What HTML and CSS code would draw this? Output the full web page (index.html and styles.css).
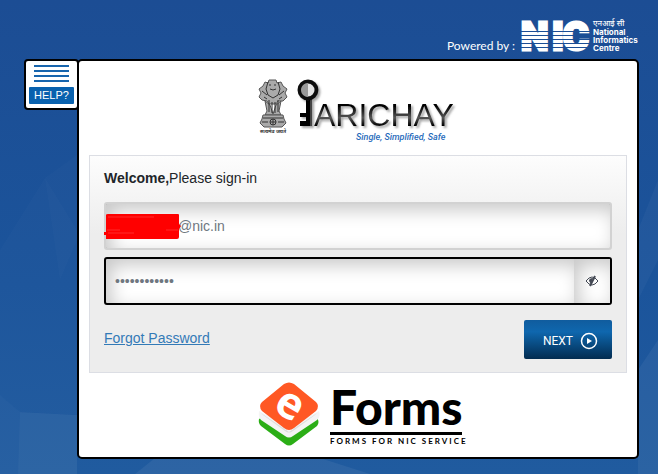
FILE: index.html
```html
<!DOCTYPE html>
<html lang="en">
<head>
<meta charset="utf-8">
<title>Parichay sign-in</title>
<link rel="stylesheet" href="styles.css">
</head>
<body>
<svg class="backdrop" viewBox="0 0 658 474" preserveAspectRatio="none" aria-hidden="true">
  <g fill="#fff">
    <path d="M0 395 20 412 77 415V474H0z" opacity=".03"/>
    <path d="M20 412 77 415V474H18z" opacity=".03"/>
    <path d="M77 155 45 178 60 280 77 240z" opacity=".015"/>
    <path d="M0 250 45 178 77 230V415L20 412 0 395z" opacity=".015"/>
    <path d="M135 474 155 458H320L370 474z" opacity=".06"/>
    <path d="M658 340 638 370V474H658z" opacity=".05"/>
    <path d="M658 180 638 230V300L658 260z" opacity=".03"/>
  </g>
</svg>
<div class="page">
  <header class="powered">
    <span class="powered-label">Powered by :</span>
    <svg class="nic-mark" viewBox="0 0 68 31" role="img" aria-label="NIC">
      <text class="nic-text" y="30"><tspan x="0">N</tspan><tspan x="31">I</tspan><tspan x="42">C</tspan></text>
      <path class="nic-stripes" d="M-1 11h71v1h-71zM-1 15h71v1h-71zM-1 19h71v1h-71zM-1 23h71v1h-71zM-1 27h71v1h-71z"/>
    </svg>
    <p class="nic-name"><span lang="hi">एनआई सी</span><span>National</span><span>Informatics</span><span>Centre</span></p>
  </header>
  <main class="layout">
    <button class="help" type="button">
      <span class="help-lines"></span>
      <span class="help-label">HELP?</span>
    </button>
    <section class="card">
      <svg class="parichay" viewBox="0 0 202 72" role="img" aria-label="Parichay: Single, Simplified, Safe">
        <defs>
          <linearGradient id="metal" x1="0" y1="0" x2="0" y2="1"><stop offset=".25" stop-color="#000"/><stop offset=".58" stop-color="#555"/><stop offset=".8" stop-color="#000"/></linearGradient>
          <filter id="shade" x="-10%" y="-20%" width="125%" height="150%"><feDropShadow dx="2" dy="2" stdDeviation="1.2" flood-color="#777" flood-opacity=".65"/></filter>
        </defs>
        <g fill="#aaa" stroke="#555" stroke-width="1">
          <path d="M6 8 8 4 11 5 12 2 19 2 20 5 24 4 26 8 30 11 28 15 30 19 26 23 21 23 19 26H12L10 23 5 22 2 19 4 15 2 11z"/>
          <path d="M8 23 10 33 8 37H24L22 33 24 23 19 27 16 36 13 27z"/>
          <path d="M6 37H26L27 41 29 45 25 49H7L3 45 5 41z"/>
        </g>
        <g fill="none" stroke="#333" stroke-width="1">
          <path d="M12 7h2m3 0h2M13 11q3 2 6 0M11 4 9 11 11 17 16 20 21 17 23 11 21 4M5 13l5 4M27 13l-5 4M7 19l3 2M25 19l-3 2M12 22v12M15 24v11M18 24v11M21 22v12M6 40H26"/>
          <circle cx="16" cy="44" r="3"/><path d="M16 41v6M13 44h6M5 44h6M21 44h6"/>
        </g>
        <text class="motto" x="3" y="55">सत्यमेव जयते</text>
        <g filter="url(#shade)">
          <path d="M49 21h4v27h-4z"/>
          <path d="M53 21h2v27h-2z" fill="#444"/>
          <path d="M43 35h6v4h-6zM43 43h7v5h-7z"/>
          <circle cx="51" cy="12" r="8.5" fill="#e4e4e4" stroke="#111" stroke-width="4"/>
          <path d="M51 5a7 7 0 0 0 0 14z" fill="#999"/>
          <text class="parichay-text" x="57" y="48">ARICHAY</text>
        </g>
        <text class="tagline" x="99" y="62">Single, Simplified, Safe</text>
      </svg>
      <form class="signin">
        <h1 class="welcome"><strong>Welcome,</strong>Please sign-in</h1>
        <div class="field">
          <svg class="redaction" viewBox="0 0 77 28" aria-hidden="true"><path fill="red" d="M2 3Q2 2 4 2L74 2Q75 2 75 3V12L77 14 75 17V25Q75 27 73 27L2 27V23H0V20H2z"/><path d="M4 5H50M3 18H16M4 21H30M62 18H74" stroke="#ff2a2a" fill="none"/></svg>
          <input class="email" type="text" aria-label="Email" value="@nic.in">
        </div>
        <div class="field field-password">
          <input class="password" type="password" aria-label="Password" value="abcdefghijkl">
          <button class="reveal" type="button" aria-label="Show password">
            <svg viewBox="0 0 14 12"><g fill="none" stroke="#454a55"><path d="M1 6Q4 2 7 2T13 6Q10 10 7 10T1 6z"/><path d="M5 11 10 1" stroke-width="2"/></g><path d="M8 3Q4 3 4 6L6 9z" fill="#454a55"/></svg>
          </button>
        </div>
        <div class="actions">
          <a class="forgot" href="#">Forgot Password</a>
          <button class="next" type="submit">NEXT
            <svg viewBox="0 0 18 18" aria-hidden="true"><circle cx="9" cy="9" r="7.5" fill="none" stroke="#fff" stroke-width="1.5"/><path d="M7 6v6l5-3z" fill="#fff"/></svg>
          </button>
        </div>
      </form>
      <footer class="eforms">
        <svg class="eforms-mark" viewBox="0 0 62 66" aria-hidden="true">
          <path d="M3 36 31 52 59 36Q62 40 59 44L35 62Q31 65 27 62L3 44Q0 41 1 37z" fill="#2bae16"/>
          <path d="M1 29 31 45 61 29Q63 35 59 38L35 54Q31 57 27 54L3 38Q0 35 1 29z" fill="#f4f4f4"/>
          <path d="M3 31 31 50 59 31 57 33 35 49Q31 52 27 49L5 33z" fill="#ddd"/>
          <path d="M26 2Q31-1 36 2L58 20Q62 24 58 29L36 46Q31 50 26 46L4 29Q0 24 4 20z" fill="#ff5824"/>
          <text class="e-letter" x="18" y="36" transform="rotate(30 31 24)">e</text>
        </svg>
        <div class="eforms-words">
          <span class="eforms-name">Forms</span>
          <span class="eforms-sub">FORMS FOR NIC SERVICE</span>
        </div>
      </footer>
    </section>
  </main>
</div>
</body>
</html>
```
FILE: styles.css
```css
* { box-sizing: border-box; }
body {
  margin: 0;
  min-height: 100vh;
  background: linear-gradient(#1c4d94, #1b549b 60%, #205b9f);
  color: #212529;
  font-family: "Liberation Sans", Arial, sans-serif;
  font-size: 14px;
}
button, input { font: inherit; }
.backdrop { position: absolute; width: 100%; height: 100%; z-index: -1; }
.page { padding: 18px 19px 15px 24px; }
.powered { display: flex; justify-content: flex-end; align-items: flex-start; height: 41px; color: #fff; }
.powered-label { margin: 20px 6px 0 0; font: 12px/16px Lato, sans-serif; }
.nic-mark { width: 68px; height: 31px; margin: 2px 4px 0 0; overflow: visible; }
.nic-text { font: 900 39px Roboto, sans-serif; fill: #fff; stroke: #fff; stroke-width: 3; }
.nic-stripes { fill: #1c4e95; }
.nic-name { display: flex; flex-direction: column; width: 46px; margin: 0; font: bold 8px/8px Inter, "Noto Sans", sans-serif; }
.nic-name span { white-space: nowrap; }
.nic-name span:first-child { line-height: 10px; font-weight: 500; }
.layout { display: flex; align-items: flex-start; }
.help {
  display: flex; flex-direction: column; gap: 5px;
  width: 55px; height: 51px; padding: 4px 3px;
  margin-right: -2px; border: 2px solid #000; border-radius: 4px; background: #fff;
}
.help-lines { flex: none; height: 17px; margin: 0 5px; background: repeating-linear-gradient(#1765ad 0 2px, #fff 2px 5px); }
.help-label { background: #0861ae; color: #fff; font-size: 11px; line-height: 17px; text-align: center; border-radius: 1px; }
.card { flex: 1; border: 2px solid #000; border-radius: 5px; background: #fff; padding: 17px 10px 9px; }
.parichay { display: block; width: 202px; height: 72px; margin: 0 auto 5px 168px; overflow: visible; }
.parichay-text { font: 32px "Liberation Sans", sans-serif; fill: url(#metal); }
.motto { font: bold 5px "Noto Sans", sans-serif; fill: #333; }
.tagline { font: italic 500 9px Roboto, sans-serif; fill: #286bbb; }
.signin { border: 1px solid #dcdee4; background: linear-gradient(#fdfdfd, #ededed 36%); padding: 14px 14px 13px; }
.welcome { margin: 0 0 16px; font-size: 14px; line-height: 16px; font-weight: normal; }
.field { position: relative; display: flex; height: 48px; margin-bottom: 7px; border: 2px solid #d2d2d2; border-radius: 3px; background: #fff; }
.field input { flex: 1; min-width: 0; border: 0; outline: 0; padding: 0 9px; background: transparent; color: #6f7780; box-shadow: inset 5px 6px 18px #00000038; }
.field .email { padding-left: 72px; }
.redaction { position: absolute; left: -2px; top: 8px; width: 77px; height: 28px; }
.field-password { border-color: #000; margin-bottom: 15px; }
.reveal { width: 36px; padding: 0; border: 0; background: #fff; box-shadow: inset 5px 6px 18px #00000038; }
.reveal svg { display: block; width: 14px; height: 12px; margin: auto; }
.actions { display: flex; justify-content: space-between; align-items: flex-start; }
.forgot { color: #337ab7; line-height: 36px; }
.next {
  display: flex; align-items: center; justify-content: flex-end; gap: 7px;
  width: 88px; height: 39px; padding: 3px 14px 0; border: 0; border-radius: 2px;
  background: linear-gradient(#105c9e, #0f67ae 30%, #022c50); color: #fff;
  font: 12px Roboto, sans-serif;
}
.next svg { width: 18px; height: 18px; }
.eforms { display: flex; gap: 10px; margin: 9px 0 0 169px; }
.eforms-mark { width: 62px; height: 66px; overflow: visible; }
.e-letter { font: bold 44px "Open Sans", sans-serif; fill: #fff; }
.eforms-words { display: flex; flex-direction: column; width: 132px; }
.eforms-name { font: 900 48px/50px Lato, sans-serif; border-bottom: 3px solid #000; color: #000; }
.eforms-sub { font: 700 8px/13px Lato, sans-serif; color: #000; white-space: nowrap; letter-spacing: 2px; }
```
